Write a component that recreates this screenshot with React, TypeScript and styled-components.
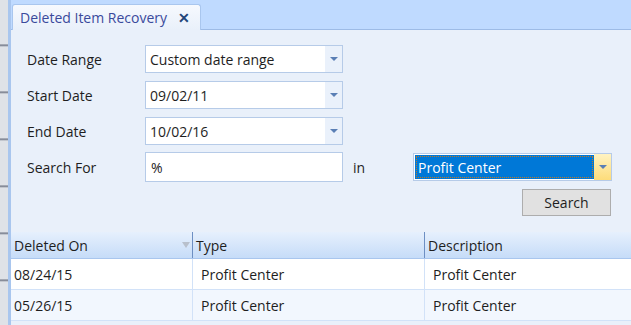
import React from "react";
import styled, { createGlobalStyle } from "styled-components";

const GlobalStyle = createGlobalStyle`
  html, body {
    margin: 0;
    padding: 0;
    background: #e9f0fa;
    font-family: "Open Sans", "Noto Sans", sans-serif;
    font-size: 14px;
    color: #1e1e1e;
  }
`;

const Window = styled.div`
  width: 631px;
  height: 325px;
  display: flex;
  overflow: hidden;
`;

const SideStrip = styled.div`
  width: 8px;
  flex-shrink: 0;
  background: repeating-linear-gradient(
    180deg,
    #dfe2e7 0px,
    #dfe2e7 44px,
    #6a7080 45px,
    #dfe2e7 47px
  );
`;

const SideBorder = styled.div`
  width: 3px;
  flex-shrink: 0;
  background: #a9c6ee;
`;

const Main = styled.div`
  flex: 1;
  display: flex;
  flex-direction: column;
  min-width: 0;
`;

const TabStrip = styled.div`
  height: 29px;
  background: #bfdaff;
  border-bottom: 1px solid #9dbbe6;
  display: flex;
  align-items: flex-end;
  padding-left: 1px;
`;

const Tab = styled.div`
  height: 26px;
  width: 189px;
  box-sizing: border-box;
  margin-bottom: -1px;
  background: linear-gradient(#f6f9fe, #e9f0fa);
  border: 1px solid #a9c6ee;
  border-bottom: none;
  border-radius: 3px 3px 0 0;
  display: flex;
  align-items: center;
  justify-content: space-between;
  padding: 0 10px 0 7px;
  color: #3a4a9c;
`;

const CloseX = styled.span`
  font-weight: 700;
  font-size: 14px;
  color: #23457a;
`;

const Form = styled.div`
  padding: 15px 0 0 16px;
  display: grid;
  grid-template-columns: 118px 198px 70px 199px;
  grid-auto-rows: 28px;
  row-gap: 8px;
  align-items: center;
`;

const Label = styled.div``;

const InLabel = styled.div`
  padding-left: 10px;
`;

const Combo = styled.div`
  height: 28px;
  box-sizing: border-box;
  border: 1px solid #b6cbe8;
  background: #fff;
  display: flex;
`;

const ComboText = styled.div`
  flex: 1;
  padding-left: 4px;
  display: flex;
  align-items: center;
`;

const ArrowBtn = styled.div<{ $hot?: boolean }>`
  width: 17px;
  display: flex;
  align-items: center;
  justify-content: center;
  background: ${(p) =>
    p.$hot ? "linear-gradient(#fff3c2, #fddc7a)" : "#eaf1fb"};
`;

const Arrow = styled.span`
  width: 0;
  height: 0;
  border-left: 4px solid transparent;
  border-right: 4px solid transparent;
  border-top: 4px solid #5a7fb5;
`;

const SelectedText = styled.div`
  flex: 1;
  background: #0078d7;
  color: #fff;
  display: flex;
  align-items: center;
  padding-left: 3px;
  outline: 1px dotted #c77a1c;
  outline-offset: -2px;
  margin: 1px 0 1px 1px;
`;

const TextBox = styled.div`
  height: 30px;
  box-sizing: border-box;
  border: 1px solid #b6cbe8;
  background: #fff;
  display: flex;
  align-items: center;
  padding-left: 5px;
`;

const ButtonRow = styled.div`
  grid-column: 1 / -1;
  display: flex;
  justify-content: flex-end;
  padding-right: 1px;
  margin-top: -1px;
`;

const Button = styled.div`
  width: 89px;
  height: 27px;
  box-sizing: border-box;
  border: 1px solid #adadad;
  background: #e1e1e1;
  display: flex;
  align-items: center;
  justify-content: center;
`;

const Grid = styled.div`
  margin-top: 15px;
`;

const Row = styled.div<{ $alt?: boolean; $head?: boolean }>`
  display: grid;
  grid-template-columns: 181px 232px 1fr;
  height: ${(p) => (p.$head ? 27 : 31)}px;
  box-sizing: border-box;
  background: ${(p) =>
    p.$head ? "linear-gradient(#e6f0fd, #c6dcf8)" : p.$alt ? "#f2f7fe" : "#fff"};
  border-bottom: 1px solid ${(p) => (p.$head ? "#a9c6ee" : "#d2e2f8")};
`;

const Cell = styled.div<{ $head?: boolean }>`
  position: relative;
  display: flex;
  align-items: center;
  padding-left: ${(p) => (p.$head ? 3 : 8)}px;
  border-left: 1px solid ${(p) => (p.$head ? "#6d8fc3" : "#d2e2f8")};
  &:first-child {
    border-left: none;
    padding-left: 3px;
  }
`;

const FilterIcon = styled.span`
  position: absolute;
  right: 2px;
  top: 10px;
  width: 0;
  height: 0;
  border-left: 4px solid transparent;
  border-right: 4px solid transparent;
  border-top: 6px solid #b8c0cc;
`;

export default function App() {
  return (
    <Window>
      <GlobalStyle />
      <SideStrip />
      <SideBorder />
      <Main>
        <TabStrip>
          <Tab>
            <span>Deleted Item Recovery</span>
            <CloseX>✕</CloseX>
          </Tab>
        </TabStrip>
        <Form>
          <Label>Date Range</Label>
          <Combo>
            <ComboText>Custom date range</ComboText>
            <ArrowBtn>
              <Arrow />
            </ArrowBtn>
          </Combo>
          <div />
          <div />
          <Label>Start Date</Label>
          <Combo>
            <ComboText>09/02/11</ComboText>
            <ArrowBtn>
              <Arrow />
            </ArrowBtn>
          </Combo>
          <div />
          <div />
          <Label>End Date</Label>
          <Combo>
            <ComboText>10/02/16</ComboText>
            <ArrowBtn>
              <Arrow />
            </ArrowBtn>
          </Combo>
          <div />
          <div />
          <Label>Search For</Label>
          <TextBox>%</TextBox>
          <InLabel>in</InLabel>
          <Combo>
            <SelectedText>Profit Center</SelectedText>
            <ArrowBtn $hot>
              <Arrow />
            </ArrowBtn>
          </Combo>
          <ButtonRow>
            <Button>Search</Button>
          </ButtonRow>
        </Form>
        <Grid>
          <Row $head>
            <Cell $head>
              Deleted On
              <FilterIcon />
            </Cell>
            <Cell $head>Type</Cell>
            <Cell $head>Description</Cell>
          </Row>
          <Row>
            <Cell>08/24/15</Cell>
            <Cell>Profit Center</Cell>
            <Cell>Profit Center</Cell>
          </Row>
          <Row $alt>
            <Cell>05/26/15</Cell>
            <Cell>Profit Center</Cell>
            <Cell>Profit Center</Cell>
          </Row>
        </Grid>
      </Main>
    </Window>
  );
}
